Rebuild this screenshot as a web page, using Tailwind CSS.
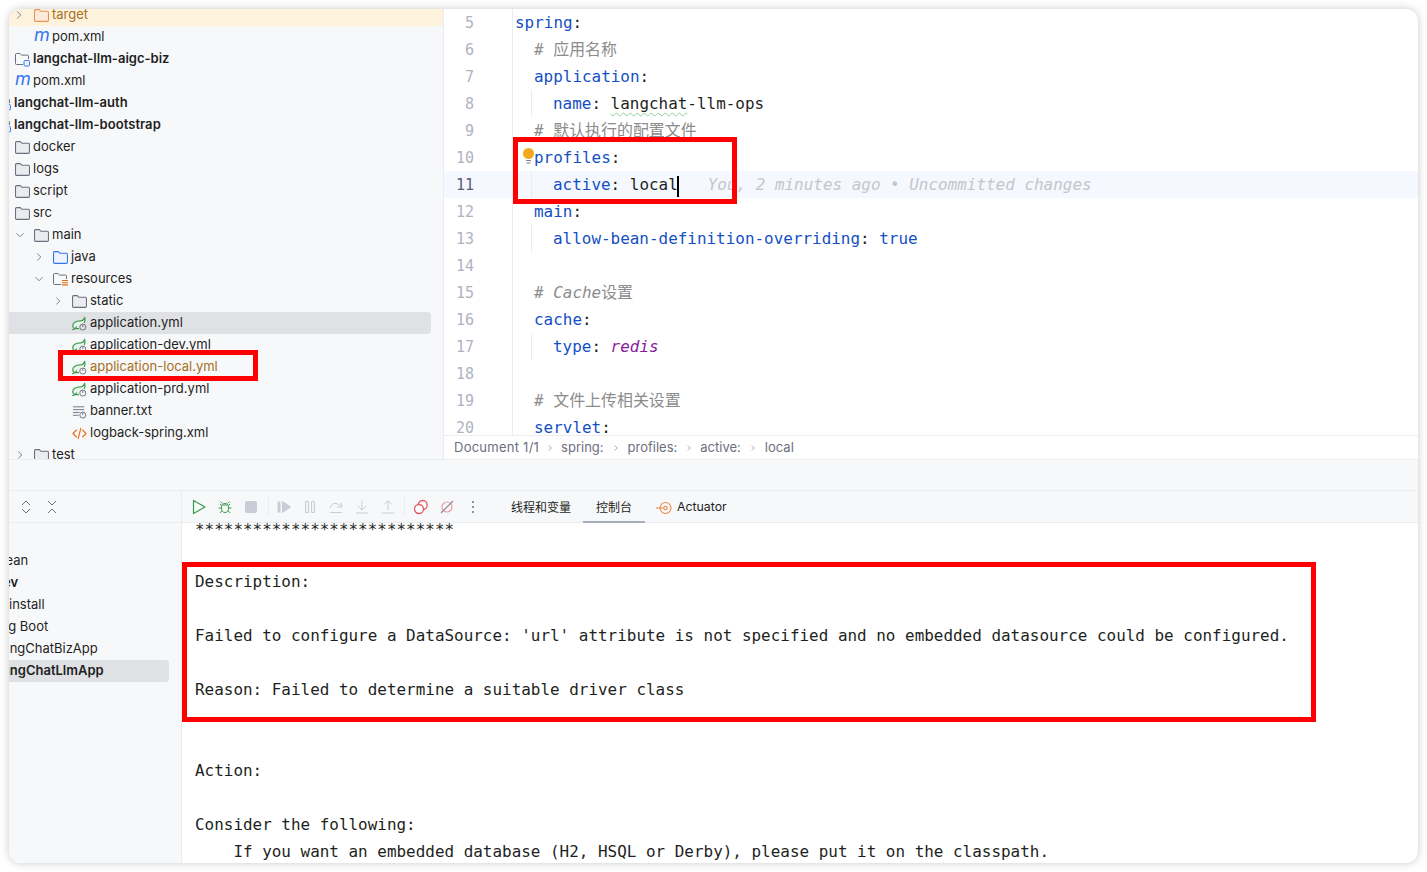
<!DOCTYPE html>
<html lang="en">
<head>
<meta charset="UTF-8">
<title>application-local.yml</title>
<script src="https://cdn.jsdelivr.net/npm/@tailwindcss/browser@4"></script>
</head>
<body class="bg-white h-[872px] w-[1427px] overflow-hidden p-[9px] pb-[9px] font-['Inter','Noto_Sans_CJK_SC',sans-serif] text-[13px] text-[#1e1f22]">

<svg class="hidden">
  <symbol id="folder" viewBox="1 1 14 14"><path d="M1.500 3.500a1 1 0 0 1 1-1h3.400l1.600 1.600h6a1 1 0 0 1 1 1v7.400a1 1 0 0 1-1 1h-11a1 1 0 0 1-1-1z" fill="#ebecf0" stroke="#6c707e"/></symbol>
  <symbol id="folder-orange" viewBox="1 1 14 14"><path d="M1.500 3.500a1 1 0 0 1 1-1h3.400l1.600 1.600h6a1 1 0 0 1 1 1v7.400a1 1 0 0 1-1 1h-11a1 1 0 0 1-1-1z" fill="#fdeadb" stroke="#e8935a"/></symbol>
  <symbol id="folder-blue" viewBox="1 1 14 14"><path d="M1.500 3.500a1 1 0 0 1 1-1h3.400l1.600 1.600h6a1 1 0 0 1 1 1v7.400a1 1 0 0 1-1 1h-11a1 1 0 0 1-1-1z" fill="#edf3ff" stroke="#3574f0"/></symbol>
  <symbol id="folder-module" viewBox="1 1 15 15"><path d="M9 13.500H2.500a1 1 0 0 1-1-1v-9a1 1 0 0 1 1-1h3.400l1.600 1.600h6a1 1 0 0 1 1 1v3" fill="none" stroke="#6c707e"/><rect x="10" y="9.500" width="5.500" height="5.500" rx="1.200" fill="#edf3ff" stroke="#3574f0"/></symbol>
  <symbol id="folder-res" viewBox="1 1 15 15"><path d="M9 13.500H2.500a1 1 0 0 1-1-1v-9a1 1 0 0 1 1-1h3.400l1.600 1.600h6a1 1 0 0 1 1 1v3" fill="none" stroke="#6c707e"/><path d="M10 9.500h6M10 11.700h6M10 13.900h6" stroke="#e66d17" stroke-width="1.100"/></symbol>
  <symbol id="spring" viewBox="0 0 16 16"><path d="M7 13.500H4.200C2.200 13.500.800 12.200.800 10.500.800 7.500 4 5.200 8.800 5.200c2.200 0 3.700-1.100 4.700-3.700.6 1.900.6 3.800-.2 5.400L9 9z" fill="#e6f7e9" stroke="none"/><path d="M7 13.500H4.200C2.200 13.500.800 12.200.800 10.500.800 7.500 4 5.200 8.800 5.200c2.200 0 3.700-1.100 4.700-3.700.6 1.900.6 3.800-.2 5.400M.800 14.500c2-.2 3.200-1.200 4-2.800" fill="none" stroke="#3d9a50" stroke-width="1.300" stroke-linecap="round" stroke-linejoin="round"/><circle cx="11.500" cy="11.800" r="3.200" fill="none" stroke="#6c707e"/><path d="M11.500 9v2.800" stroke="#6c707e"/></symbol>
  <symbol id="text" viewBox="0 0 16 16"><path d="M1 3h12M1 6h12M1 9h7M1 12h6" stroke="#6c707e"/><circle cx="11.500" cy="11.800" r="3.200" fill="#f7f8fa" stroke="#6c707e"/><path d="M11.500 9v2.800" stroke="#6c707e"/></symbol>
  <symbol id="xml" viewBox="0 0 16 16"><path d="M5 4 1 8l4 4M11 4l4 4-4 4M9.500 2 6.500 14" fill="none" stroke="#e66d17" stroke-width="1.200"/></symbol>
  <symbol id="chev-r" viewBox="0 0 16 16"><path d="m6 4 4 4-4 4" fill="none" stroke="#6c707e"/></symbol>
  <symbol id="chev-d" viewBox="0 0 16 16"><path d="m4 6 4 4 4-4" fill="none" stroke="#6c707e"/></symbol>
</svg>

<div class="relative w-[1409px] h-[854px] rounded-[12px] overflow-hidden bg-white shadow-[0_0_9px_rgba(0,0,0,0.22)] flex flex-col">

  <!-- top: project tree + editor -->
  <div class="flex h-[451px] shrink-0 border-b border-[#ebecf0]">
    <div class="w-[435px] shrink-0 bg-[#f7f8fa] border-r border-[#ebecf0] overflow-hidden">
      <div class="-mt-[5px]">
        <div class="flex items-center h-[22px] pl-[3px] bg-[#fdf3dd] text-[#a5701f]"><svg class="w-[14px] h-[14px] mr-[8px] ml-0"><use href="#chev-r"/></svg><svg class="w-[15px] h-[15px] mr-[3px]"><use href="#folder-orange"/></svg>target</div>
        <div class="flex items-center h-[22px] pl-[25px]"><span class="w-[18px] text-[18px] leading-none italic text-[#3574f0] -mt-[4px]">m</span>pom.xml</div>
        <div class="flex items-center h-[22px] pl-[6px] font-semibold"><svg class="w-[15px] h-[15px] mr-[3px]"><use href="#folder-module"/></svg>langchat-llm-aigc-biz</div>
        <div class="flex items-center h-[22px] pl-[6px]"><span class="w-[18px] text-[18px] leading-none italic text-[#3574f0] -mt-[4px]">m</span>pom.xml</div>
        <div class="flex items-center h-[22px] -ml-[13px] font-semibold tracking-[0.05px]"><svg class="w-[15px] h-[15px] mr-[3px]"><use href="#folder-module"/></svg>langchat-llm-auth</div>
        <div class="flex items-center h-[22px] -ml-[13px] font-semibold tracking-[0.05px]"><svg class="w-[15px] h-[15px] mr-[3px]"><use href="#folder-module"/></svg>langchat-llm-bootstrap</div>
        <div class="flex items-center h-[22px] pl-[6px]"><svg class="w-[15px] h-[15px] mr-[3px]"><use href="#folder"/></svg>docker</div>
        <div class="flex items-center h-[22px] pl-[6px]"><svg class="w-[15px] h-[15px] mr-[3px]"><use href="#folder"/></svg>logs</div>
        <div class="flex items-center h-[22px] pl-[6px]"><svg class="w-[15px] h-[15px] mr-[3px]"><use href="#folder"/></svg>script</div>
        <div class="flex items-center h-[22px] pl-[6px]"><svg class="w-[15px] h-[15px] mr-[3px]"><use href="#folder"/></svg>src</div>
        <div class="flex items-center h-[22px] pl-[4px]"><svg class="w-[14px] h-[14px] mr-[7px]"><use href="#chev-d"/></svg><svg class="w-[15px] h-[15px] mr-[3px]"><use href="#folder"/></svg>main</div>
        <div class="flex items-center h-[22px] pl-[23px]"><svg class="w-[14px] h-[14px] mr-[7px]"><use href="#chev-r"/></svg><svg class="w-[15px] h-[15px] mr-[3px]"><use href="#folder-blue"/></svg>java</div>
        <div class="flex items-center h-[22px] pl-[23px]"><svg class="w-[14px] h-[14px] mr-[7px]"><use href="#chev-d"/></svg><svg class="w-[15px] h-[15px] mr-[3px]"><use href="#folder-res"/></svg>resources</div>
        <div class="flex items-center h-[22px] pl-[42px]"><svg class="w-[14px] h-[14px] mr-[7px]"><use href="#chev-r"/></svg><svg class="w-[15px] h-[15px] mr-[3px]"><use href="#folder"/></svg>static</div>
        <div class="flex items-center h-[22px] pl-[63px] w-[422px] rounded-r-[4px] bg-[#dfe1e5]"><svg class="w-[15px] h-[15px] mr-[3px]"><use href="#spring"/></svg>application.yml</div>
        <div class="flex items-center h-[22px] pl-[63px]"><svg class="w-[15px] h-[15px] mr-[3px]"><use href="#spring"/></svg>application-dev.yml</div>
        <div class="flex items-center h-[22px] pl-[63px] text-[#a5701f]"><svg class="w-[15px] h-[15px] mr-[3px]"><use href="#spring"/></svg>application-local.yml</div>
        <div class="flex items-center h-[22px] pl-[63px]"><svg class="w-[15px] h-[15px] mr-[3px]"><use href="#spring"/></svg>application-prd.yml</div>
        <div class="flex items-center h-[22px] pl-[63px]"><svg class="w-[15px] h-[15px] mr-[3px]"><use href="#text"/></svg>banner.txt</div>
        <div class="flex items-center h-[22px] pl-[63px]"><svg class="w-[15px] h-[15px] mr-[3px]"><use href="#xml"/></svg>logback-spring.xml</div>
        <div class="flex items-center h-[22px] pl-[4px]"><svg class="w-[14px] h-[14px] mr-[7px]"><use href="#chev-r"/></svg><svg class="w-[15px] h-[15px] mr-[3px]"><use href="#folder"/></svg>test</div>
      </div>
    </div>

    <div class="flex-1 min-w-0 flex flex-col">
      <div class="relative flex-1 min-h-0 overflow-hidden flex flex-col font-['DejaVu_Sans_Mono','Noto_Sans_CJK_SC',monospace] text-[15.94px] leading-[27px] whitespace-pre">
        <div class="flex h-[27px] shrink-0"><span class="w-[30px] pt-[1px] text-right shrink-0 text-[#aeb3c1] text-[15px]">5</span><span class="ml-[38px] pl-[2px] border-l border-[#ebecf0] flex-1 text-[#1450c4]">spring<span class="text-[#1e1f22]">:</span></span></div>
        <div class="flex h-[27px] shrink-0"><span class="w-[30px] pt-[1px] text-right shrink-0 text-[#aeb3c1] text-[15px]">6</span><span class="ml-[38px] pl-[21px] border-l border-[#ebecf0] flex-1 text-[#8c8c8c]"><i># </i>应用名称</span></div>
        <div class="flex h-[27px] shrink-0"><span class="w-[30px] pt-[1px] text-right shrink-0 text-[#aeb3c1] text-[15px]">7</span><span class="ml-[38px] pl-[21px] border-l border-[#ebecf0] flex-1 text-[#1450c4]">application<span class="text-[#1e1f22]">:</span></span></div>
        <div class="flex h-[27px] shrink-0"><span class="w-[30px] pt-[1px] text-right shrink-0 text-[#aeb3c1] text-[15px]">8</span><span class="ml-[38px] pl-[18px] border-l border-[#ebecf0] flex-1"><span class="border-l border-[#ebecf0] pl-[21px] inline-block h-[27px] text-[#1450c4]">name<span class="text-[#1e1f22]">: <span class="underline decoration-wavy decoration-[#8fce95] decoration-1 underline-offset-[3px]">langchat</span>-llm-ops</span></span></span></div>
        <div class="flex h-[27px] shrink-0"><span class="w-[30px] pt-[1px] text-right shrink-0 text-[#aeb3c1] text-[15px]">9</span><span class="ml-[38px] pl-[21px] border-l border-[#ebecf0] flex-1 text-[#8c8c8c]"><i># </i>默认执行的配置文件</span></div>
        <div class="flex h-[27px] shrink-0"><span class="w-[30px] pt-[1px] text-right shrink-0 text-[#aeb3c1] text-[15px]">10</span><span class="relative ml-[38px] pl-[21px] border-l border-[#ebecf0] flex-1 text-[#1450c4]"><svg class="absolute left-[9px] top-[4px] w-[13px] h-[16px]" viewBox="0 0 13 16"><circle cx="6.500" cy="5.500" r="5.500" fill="#f2a91e"/><path d="M4 12.500h5M4.500 15h4" stroke="#7c7f88" stroke-width="1"/></svg>profiles<span class="text-[#1e1f22]">:</span></span></div>
        <div class="flex h-[27px] shrink-0 bg-[#f5f8fe]"><span class="w-[30px] pt-[1px] text-right shrink-0 text-[#5a5d6b] text-[15px]">11</span><span class="ml-[38px] pl-[18px] border-l border-[#ebecf0] flex-1"><span class="border-l border-[#ebecf0] pl-[21px] inline-block h-[27px] text-[#1450c4]">active<span class="text-[#1e1f22]">: <span class="relative">local<span class="absolute -right-[1px] top-[1px] h-[21px] w-[2px] bg-black"></span></span></span><i class="ml-[30px] text-[#c4c6cc]">You, 2 minutes ago • Uncommitted changes</i></span></span></div>
        <div class="flex h-[27px] shrink-0"><span class="w-[30px] pt-[1px] text-right shrink-0 text-[#aeb3c1] text-[15px]">12</span><span class="ml-[38px] pl-[21px] border-l border-[#ebecf0] flex-1 text-[#1450c4]">main<span class="text-[#1e1f22]">:</span></span></div>
        <div class="flex h-[27px] shrink-0"><span class="w-[30px] pt-[1px] text-right shrink-0 text-[#aeb3c1] text-[15px]">13</span><span class="ml-[38px] pl-[18px] border-l border-[#ebecf0] flex-1"><span class="border-l border-[#ebecf0] pl-[21px] inline-block h-[27px] text-[#1450c4]">allow-bean-definition-overriding<span class="text-[#1e1f22]">: </span>true</span></span></div>
        <div class="flex h-[27px] shrink-0"><span class="w-[30px] pt-[1px] text-right shrink-0 text-[#aeb3c1] text-[15px]">14</span><span class="ml-[38px] border-l border-[#ebecf0] flex-1"></span></div>
        <div class="flex h-[27px] shrink-0"><span class="w-[30px] pt-[1px] text-right shrink-0 text-[#aeb3c1] text-[15px]">15</span><span class="ml-[38px] pl-[21px] border-l border-[#ebecf0] flex-1 text-[#8c8c8c]"><i># Cache</i>设置</span></div>
        <div class="flex h-[27px] shrink-0"><span class="w-[30px] pt-[1px] text-right shrink-0 text-[#aeb3c1] text-[15px]">16</span><span class="ml-[38px] pl-[21px] border-l border-[#ebecf0] flex-1 text-[#1450c4]">cache<span class="text-[#1e1f22]">:</span></span></div>
        <div class="flex h-[27px] shrink-0"><span class="w-[30px] pt-[1px] text-right shrink-0 text-[#aeb3c1] text-[15px]">17</span><span class="ml-[38px] pl-[18px] border-l border-[#ebecf0] flex-1"><span class="border-l border-[#ebecf0] pl-[21px] inline-block h-[27px] text-[#1450c4]">type<span class="text-[#1e1f22]">: </span><i class="text-[#8a1a9c]">redis</i></span></span></div>
        <div class="flex h-[27px] shrink-0"><span class="w-[30px] pt-[1px] text-right shrink-0 text-[#aeb3c1] text-[15px]">18</span><span class="ml-[38px] border-l border-[#ebecf0] flex-1"></span></div>
        <div class="flex h-[27px] shrink-0"><span class="w-[30px] pt-[1px] text-right shrink-0 text-[#aeb3c1] text-[15px]">19</span><span class="ml-[38px] pl-[21px] border-l border-[#ebecf0] flex-1 text-[#8c8c8c]"><i># </i>文件上传相关设置</span></div>
        <div class="flex h-[27px] shrink-0"><span class="w-[30px] pt-[1px] text-right shrink-0 text-[#aeb3c1] text-[15px]">20</span><span class="ml-[38px] pl-[21px] border-l border-[#ebecf0] flex-1 text-[#1450c4]">servlet<span class="text-[#1e1f22]">:</span></span></div>
      </div>
      <div class="h-[24px] shrink-0 border-t border-[#ebecf0] bg-white flex items-center pl-[10px] text-[#6c707e]">
        <span class="tracking-[0.25px]">Document 1/1</span><svg class="w-[10px] h-[10px] mx-[6px]"><use href="#chev-r"/></svg><span>spring:</span><svg class="w-[10px] h-[10px] mx-[7px]"><use href="#chev-r"/></svg><span>profiles:</span><svg class="w-[10px] h-[10px] mx-[6.500px]"><use href="#chev-r"/></svg><span>active:</span><svg class="w-[10px] h-[10px] mx-[7px]"><use href="#chev-r"/></svg><span>local</span>
      </div>
    </div>
  </div>

  <!-- gap between the tool window and the editor -->
  <div class="h-[31px] shrink-0 bg-[#f7f8fa] border-b border-[#ebecf0]"></div>

  <!-- run tool window -->
  <div class="flex-1 min-h-0 flex">
    <div class="w-[173px] shrink-0 bg-[#f7f8fa] border-r border-[#ebecf0] overflow-hidden">
      <div class="h-[32px] border-b border-[#ebecf0] flex items-center">
        <svg class="w-[16px] h-[16px] ml-[9px]" viewBox="0 0 16 16"><path d="m4 6 4-4 4 4M4 10l4 4 4-4" fill="none" stroke="#6c707e"/></svg>
        <svg class="w-[16px] h-[16px] ml-[10px]" viewBox="0 0 16 16"><path d="m4 2 4 4 4-4M4 14l4-4 4 4" fill="none" stroke="#6c707e"/></svg>
      </div>
      <div class="pt-[27px] whitespace-nowrap">
        <div class="h-[22px] flex items-center -ml-[14px]">clean</div>
        <div class="h-[22px] flex items-center -ml-[14px] font-semibold">dev</div>
        <div class="h-[22px] flex items-center">install</div>
        <div class="h-[22px] flex items-center -ml-[33px]">Spring Boot</div>
        <div class="h-[22px] flex items-center -ml-[14px]">LangChatBizApp</div>
        <div class="h-[22px] flex items-center -ml-[14px] w-[174px] rounded-r-[4px] bg-[#dfe1e5] font-semibold">LangChatLlmApp</div>
      </div>
    </div>

    <div class="flex-1 min-w-0 flex flex-col">
      <div class="h-[32px] shrink-0 border-b border-[#ebecf0] bg-[#f7f8fa] flex items-center pl-[4px]">
        <span class="w-[26px] flex justify-center"><svg class="w-[16px] h-[16px]" viewBox="0 0 16 16"><path d="M2.500 1.500v13l11.500-6.500z" fill="#f2fcf3" stroke="#3d9a50" stroke-width="1.200" stroke-linejoin="round"/></svg></span>
        <span class="w-[26px] flex justify-center"><svg class="w-[16px] h-[16px]" viewBox="0 0 16 16"><ellipse cx="8" cy="9" rx="3.500" ry="4.500" fill="#f2fcf3" stroke="#3d9a50"/><path d="M5.500 4.500 3.500 2.500M10.500 4.500l2-2M4.500 9H1.500M11.500 9h3M4.800 12l-2 2M11.200 12l2 2M4.800 6.500l-2-1.500M11.200 6.500l2-1.500M6 6h4" fill="none" stroke="#3d9a50"/></svg></span>
        <span class="w-[26px] flex justify-center"><span class="w-[12px] h-[12px] rounded-[2px] bg-[#c9ccd6]"></span></span>
        <span class="w-[1px] h-[20px] bg-[#ebecf0] ml-[4px] mr-[2px]"></span>
        <span class="w-[26px] flex justify-center"><svg class="w-[16px] h-[16px]" viewBox="0 0 16 16"><rect x="1.500" y="2.500" width="3" height="11" rx=".5" fill="#c9ccd6"/><path d="M6.500 2.500v11l8-5.500z" fill="#c9ccd6" stroke="#c9ccd6" stroke-linejoin="round"/></svg></span>
        <span class="w-[26px] flex justify-center"><svg class="w-[16px] h-[16px]" viewBox="0 0 16 16"><path d="M3.500 2.500h3v11h-3zM9.500 2.500h3v11h-3z" fill="#f2f3f5" stroke="#c9ccd6"/></svg></span>
        <span class="w-[26px] flex justify-center"><svg class="w-[16px] h-[16px]" viewBox="0 0 16 16"><path d="M2 9c1-3 3-5 6-4.500 2 .3 3.500 1.500 5 3M13.500 3.500v4.500H9M2 13.500h12" fill="none" stroke="#c9ccd6"/></svg></span>
        <span class="w-[26px] flex justify-center"><svg class="w-[16px] h-[16px]" viewBox="0 0 16 16"><path d="M8 1.500v9M4 7l4 4 4-4M2 14h12" fill="none" stroke="#c9ccd6"/></svg></span>
        <span class="w-[26px] flex justify-center"><svg class="w-[16px] h-[16px]" viewBox="0 0 16 16"><path d="M8 11V2M4 5.500l4-4 4 4M2 14h12" fill="none" stroke="#c9ccd6"/></svg></span>
        <span class="w-[1px] h-[20px] bg-[#ebecf0] ml-[3px] mr-[3px]"></span>
        <span class="w-[26px] flex justify-center"><svg class="w-[16px] h-[16px]" viewBox="0 0 16 16"><circle cx="9.700" cy="6" r="4.500" fill="#fff" stroke="#e55765" stroke-width="1.300"/><circle cx="6" cy="10" r="4.500" fill="#fff" stroke="#e55765" stroke-width="1.300"/></svg></span>
        <span class="w-[26px] flex justify-center"><svg class="w-[16px] h-[16px]" viewBox="0 0 16 16"><circle cx="8" cy="8" r="5" fill="none" stroke="#eba0a6" stroke-width="1.200"/><path d="M2 14 14 2" stroke="#8c8f99" stroke-width="1.200"/></svg></span>
        <span class="w-[26px] flex justify-center"><svg class="w-[16px] h-[16px]" viewBox="0 0 16 16"><circle cx="8" cy="3" r="1" fill="#6c707e"/><circle cx="8" cy="8" r="1" fill="#6c707e"/><circle cx="8" cy="13" r="1" fill="#6c707e"/></svg></span>
        <div class="ml-[12px] h-full pl-[13px] pr-[12px] pt-[2px] flex items-center text-[12px]">线程和变量</div>
        <div class="relative h-full px-[13px] pt-[2px] flex items-center text-[12px]">控制台<span class="absolute left-0 right-0 -bottom-[1px] h-[2px] bg-[#a8adbd]"></span></div>
        <div class="h-full pl-[11px] pt-[2px] flex items-center text-[12.300px]"><svg class="w-[16px] h-[16px] mr-[5px]" viewBox="0 0 16 16"><circle cx="9.500" cy="8" r="5.500" fill="none" stroke="#e88c4a" stroke-width="1.100"/><circle cx="9.500" cy="8" r="1.700" fill="none" stroke="#e88c4a" stroke-width="1.100"/><path d="M0 8h7.500" stroke="#e88c4a" stroke-width="1.100"/></svg>Actuator</div>
      </div>
      <div class="flex-1 min-h-0 overflow-hidden pl-[13px] font-['DejaVu_Sans_Mono',monospace] text-[15.94px] leading-[27px] whitespace-pre"><div class="-mt-[9px]"><span class="relative top-[2px]">***************************</span>

Description:

Failed to configure a DataSource: 'url' attribute is not specified and no embedded datasource could be configured.

Reason: Failed to determine a suitable driver class


Action:

Consider the following:
    If you want an embedded database (H2, HSQL or Derby), please put it on the classpath.</div></div>
    </div>
  </div>

  <!-- red annotation boxes drawn over the screenshot -->
  <div class="absolute left-[504px] top-[128px] w-[224px] h-[67px] border-[5px] border-[#ff0000]"></div>
  <div class="absolute left-[49px] top-[341px] w-[200px] h-[31px] border-[5px] border-[#ff0000]"></div>
  <div class="absolute left-[173px] top-[553px] w-[1134px] h-[160px] border-[5px] border-[#ff0000]"></div>
</div>
</body>
</html>
